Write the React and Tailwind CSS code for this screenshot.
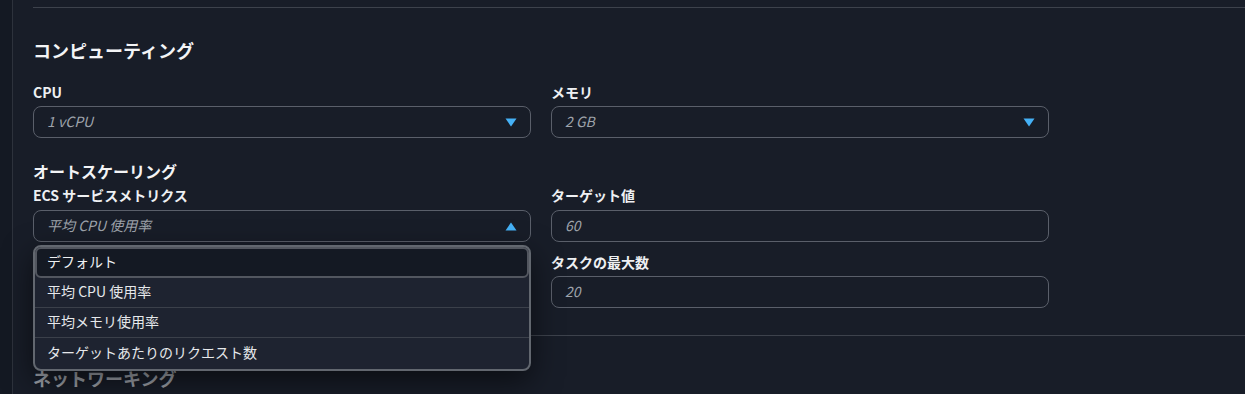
import React from "react";

const font = { fontFamily: '"Noto Sans CJK JP", "Noto Sans", sans-serif' };

function Tri({ up }) {
  return (
    <svg width="12" height="9" viewBox="0 0 12 9" className="shrink-0">
      {up ? (
        <path d="M6 0.5 L11.5 8.5 L0.5 8.5 Z" fill="#45b1f6" />
      ) : (
        <path d="M0.5 0.5 L11.5 0.5 L6 8.5 Z" fill="#45b1f6" />
      )}
    </svg>
  );
}

function Label({ children }) {
  return <div className="text-sm font-bold leading-5 text-[#eef0f3]">{children}</div>;
}

function Box({ value, arrow, up }) {
  return (
    <div className="flex h-8 items-center justify-between rounded-lg border border-[#5a5f6a] bg-[#181d28] pl-[13px] pr-[13px]">
      <span className="pb-[3px] text-sm italic text-[#9ea3ab]">{value}</span>
      {arrow && <Tri up={up} />}
    </div>
  );
}

export default function App() {
  return (
    <div className="flex min-h-[394px] w-[1245px] overflow-hidden bg-[#181d28]" style={font}>
      <div className="w-[13px] shrink-0 border-r border-[#2d323c] bg-[#141923]" />
      <div className="flex-1 pl-[20px]">
        <div className="h-[7px]" />
        <div className="border-t border-[#3d424c]" />
        <div className="mt-[28px] text-lg font-bold leading-7 text-[#f3f4f6]">コンピューティング</div>
        <div className="mt-[18px] grid w-[1016px] grid-cols-2 gap-x-[20px]">
          <div>
            <Label>CPU</Label>
            <div className="mt-1">
              <Box value="1 vCPU" arrow />
            </div>
          </div>
          <div>
            <Label>メモリ</Label>
            <div className="mt-1">
              <Box value="2 GB" arrow />
            </div>
          </div>
        </div>
        <div className="mt-[21px] text-base font-bold leading-6 text-[#f3f4f6]">オートスケーリング</div>
        <div className="mt-[2px] grid w-[1016px] grid-cols-2 gap-x-[20px]">
          <div>
            <Label>ECS サービスメトリクス</Label>
            <div className="relative mt-[5px]">
              <Box value="平均 CPU 使用率" arrow up />
              <div className="absolute left-0 right-0 top-[35px] z-10 rounded-lg border-2 border-[#62676f] bg-[#1e2330] shadow-[0_10px_30px_rgba(0,0,0,0.55)]">
                <div className="flex h-[31px] items-center rounded-md border-2 border-[#52565f] bg-[#141923] px-[10px] pb-[3px] text-sm text-[#eef0f3]">
                  デフォルト
                </div>
                <div className="flex h-[30px] items-center border-b border-[#3b404a] px-[12px] pb-[3px] text-sm text-[#e6e8eb]">
                  平均 CPU 使用率
                </div>
                <div className="flex h-[30px] items-center border-b border-[#3b404a] px-[12px] pb-[3px] text-sm text-[#e6e8eb]">
                  平均メモリ使用率
                </div>
                <div className="flex h-[31px] items-center px-[12px] pb-[3px] text-sm text-[#e6e8eb]">
                  ターゲットあたりのリクエスト数
                </div>
              </div>
            </div>
          </div>
          <div>
            <Label>ターゲット値</Label>
            <div className="mt-[5px]">
              <Box value="60" />
            </div>
            <div className="mt-[10px]">
              <Label>タスクの最大数</Label>
            </div>
            <div className="mt-[4px]">
              <Box value="20" />
            </div>
          </div>
        </div>
        <div className="mt-[27px] border-t border-[#3d424c]" />
        <div className="mt-[28px] text-lg font-bold leading-7 text-[#9ea2aa]">ネットワーキング</div>
      </div>
    </div>
  );
}
